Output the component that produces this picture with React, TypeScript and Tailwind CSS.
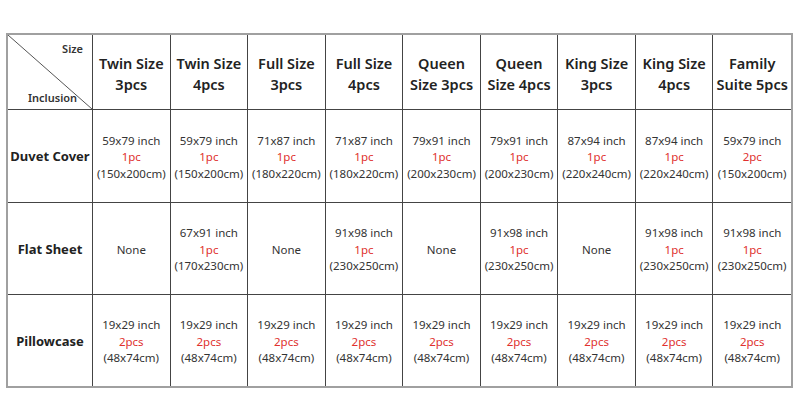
const sizes = [
  ["Twin Size", "3pcs"],
  ["Twin Size", "4pcs"],
  ["Full Size", "3pcs"],
  ["Full Size", "4pcs"],
  ["Queen", "Size 3pcs"],
  ["Queen", "Size 4pcs"],
  ["King Size", "3pcs"],
  ["King Size", "4pcs"],
  ["Family", "Suite 5pcs"],
];

type Item = [string, string, string] | null;

const rows: { label: string; items: Item[] }[] = [
  {
    label: "Duvet Cover",
    items: [
      ["59x79 inch", "1pc", "(150x200cm)"],
      ["59x79 inch", "1pc", "(150x200cm)"],
      ["71x87 inch", "1pc", "(180x220cm)"],
      ["71x87 inch", "1pc", "(180x220cm)"],
      ["79x91 inch", "1pc", "(200x230cm)"],
      ["79x91 inch", "1pc", "(200x230cm)"],
      ["87x94 inch", "1pc", "(220x240cm)"],
      ["87x94 inch", "1pc", "(220x240cm)"],
      ["59x79 inch", "2pc", "(150x200cm)"],
    ],
  },
  {
    label: "Flat Sheet",
    items: [
      null,
      ["67x91 inch", "1pc", "(170x230cm)"],
      null,
      ["91x98 inch", "1pc", "(230x250cm)"],
      null,
      ["91x98 inch", "1pc", "(230x250cm)"],
      null,
      ["91x98 inch", "1pc", "(230x250cm)"],
      ["91x98 inch", "1pc", "(230x250cm)"],
    ],
  },
  {
    label: "Pillowcase",
    items: Array.from({ length: 9 }, () => ["19x29 inch", "2pcs", "(48x74cm)"] as Item),
  },
];

export default function App() {
  return (
    <div className="w-[800px] h-[402px] bg-white pt-[33px] pl-[6px] font-['Noto_Sans',sans-serif] text-[#333]">
      <div className="w-[787px] border-2 border-[#a0a0a0] grid grid-cols-[85px_repeat(9,minmax(0,1fr))] grid-rows-[75px_93px_92px_91px]">
        {/* corner cell */}
        <div className="relative border-r border-b border-[#444] flex flex-col justify-between px-[6px] pt-[7px] pb-[4px] text-[11px] font-semibold leading-[14px]">
          <svg className="absolute inset-0 w-full h-full" preserveAspectRatio="none" viewBox="0 0 100 100">
            <line x1="0" y1="0" x2="100" y2="100" stroke="#555" strokeWidth="1" vectorEffect="non-scaling-stroke" />
          </svg>
          <span className="self-end pr-[3px]">Size</span>
          <span className="pl-[14px]">Inclusion</span>
        </div>
        {sizes.map(([a, b], i) => (
          <div
            key={i}
            className={`flex flex-col items-center justify-center pt-[3px] text-center text-[14.5px] font-semibold leading-[21px] text-[#222] border-b border-[#444] ${i < 8 ? "border-r" : ""}`}
          >
            <span>{a}</span>
            <span>{b}</span>
          </div>
        ))}
        {rows.map((row, r) => (
          <>
            <div
              key={`l${r}`}
              className={`flex items-center justify-center pt-[2px] text-[13px] font-bold text-[#222] border-r border-[#444] ${r < 2 ? "border-b" : ""}`}
            >
              {row.label}
            </div>
            {row.items.map((it, i) => (
              <div
                key={`${r}-${i}`}
                className={`flex flex-col items-center justify-center pt-[3px] text-center text-[11.5px] leading-[16.5px] border-[#444] ${i < 8 ? "border-r" : ""} ${r < 2 ? "border-b" : ""}`}
              >
                {it ? (
                  <>
                    <span>{it[0]}</span>
                    <span className="text-[#e0312e]">{it[1]}</span>
                    <span>{it[2]}</span>
                  </>
                ) : (
                  <span>None</span>
                )}
              </div>
            ))}
          </>
        ))}
      </div>
    </div>
  );
}
